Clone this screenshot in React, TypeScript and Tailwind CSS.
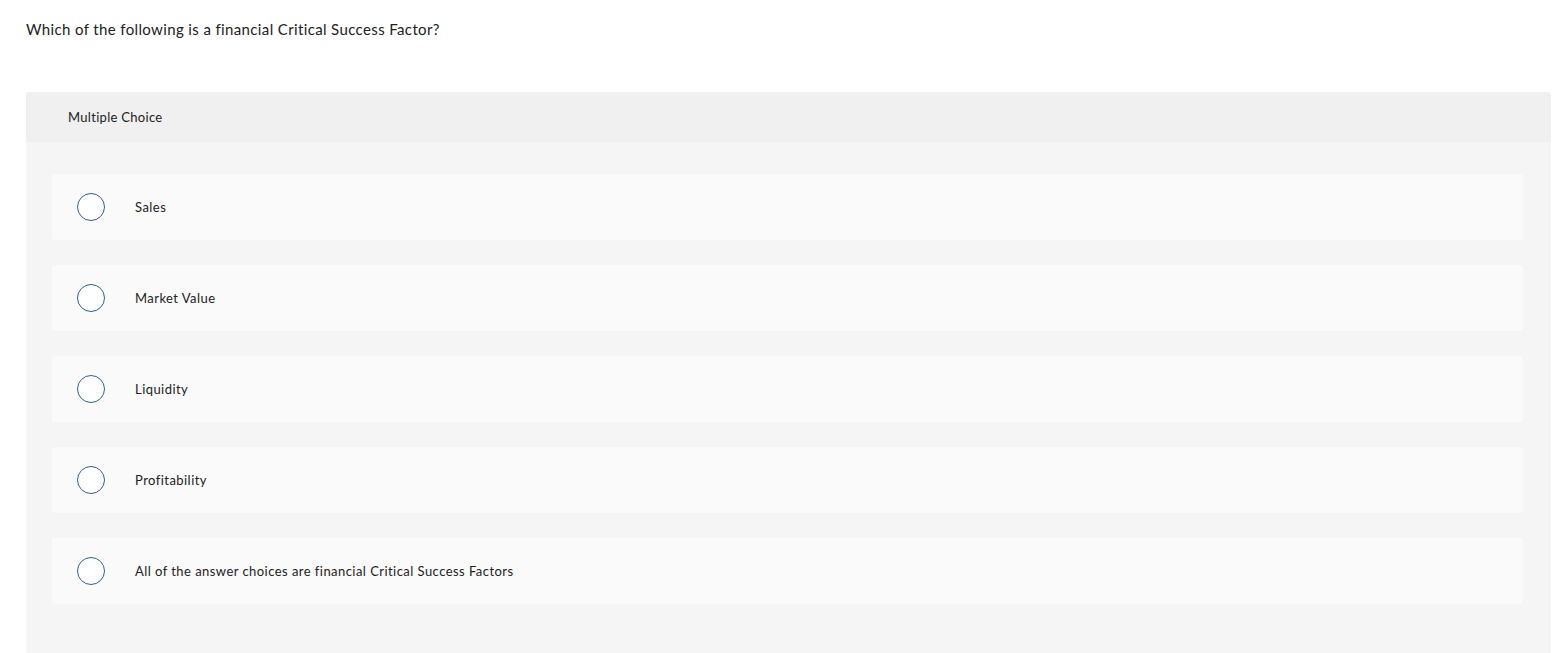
import React from "react";

const options = [
  "Sales",
  "Market Value",
  "Liquidity",
  "Profitability",
  "All of the answer choices are financial Critical Success Factors",
];

export default function App() {
  return (
    <div className="min-h-[653px] bg-white text-[#1a1a1a] [font-variant-ligatures:none]" style={{ fontFamily: "Lato, 'Open Sans', sans-serif" }}>
      <div className="pl-[26px] pr-[6px] pt-[18px]">
        <p className="text-[15px] leading-[22px] tracking-[0.37px] text-[#222]">Which of the following is a financial Critical Success Factor?</p>
        <div className="mt-[52px] rounded-t-[3px] overflow-hidden">
          <div className="h-[50px] bg-[#f0f0f0] pl-[42px] pt-[2px] flex items-center text-[13px] tracking-[0.3px] text-[#222]">Multiple Choice</div>
          <div className="bg-[#f5f5f5] pl-[26px] pr-[28px] pt-[32px] pb-[60px] flex flex-col gap-[25px]">
            {options.map((o) => (
              <div key={o} className="h-[66px] bg-[#fafafa] rounded-[3px] flex items-center pl-[25px]">
                <span className="w-[28px] h-[28px] rounded-full border-[1.5px] border-[#33618f] bg-white shrink-0" />
                <span className="ml-[30px] pt-[2px] text-[13px] tracking-[0.45px] text-[#222]">{o}</span>
              </div>
            ))}
          </div>
        </div>
      </div>
    </div>
  );
}
